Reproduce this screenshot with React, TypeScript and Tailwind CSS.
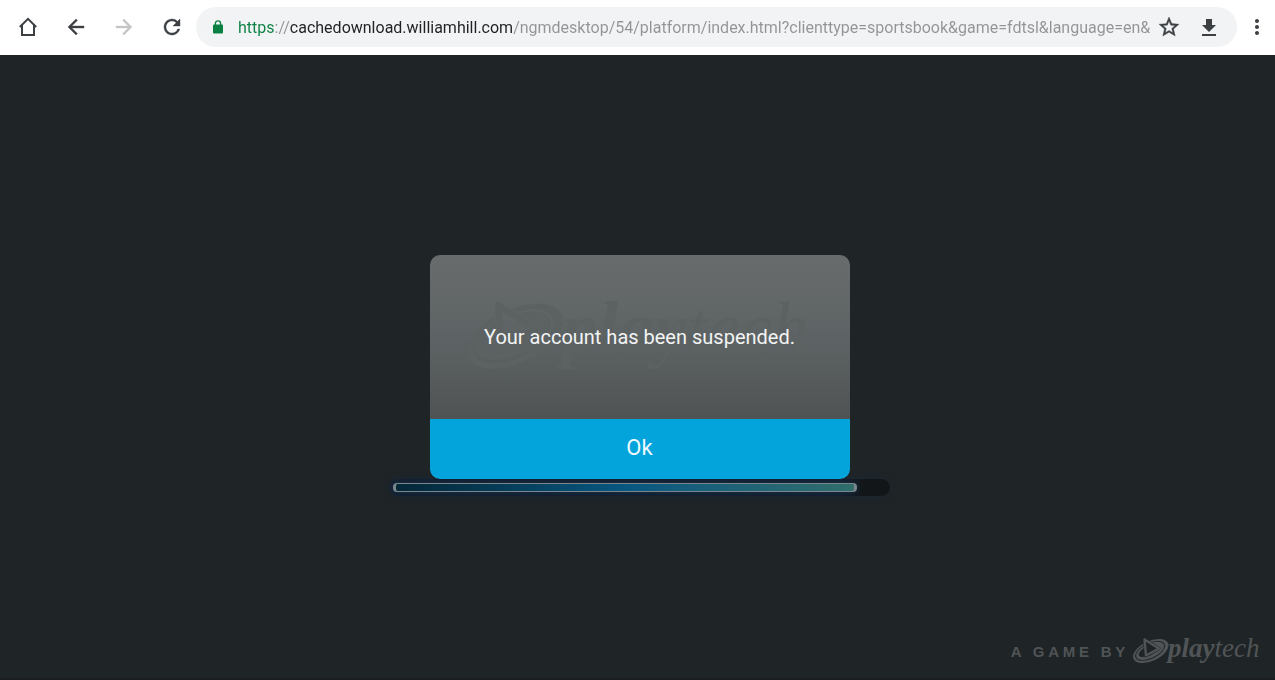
import React from "react";
import { MdArrowBack, MdArrowForward, MdRefresh, MdStarBorder, MdMoreVert } from "react-icons/md";

const ADDRESS =
  "https://cachedownload.williamhill.com/ngmdesktop/54/platform/index.html?clienttype=sportsbook&game=fdtsl&language=en&";

function HomeIcon() {
  return (
    <svg viewBox="0 0 24 24" className="size-6" fill="none" stroke="currentColor" strokeWidth="2" aria-hidden="true">
      <path d="M3.8 12 12 3.9 20.2 12M6 10.5V20h12v-9.5" />
    </svg>
  );
}

function LockIcon() {
  return (
    <svg viewBox="0 0 16 16" className="size-4 shrink-0 text-[#0b8043]" aria-hidden="true">
      <rect x="3" y="5.5" width="10" height="9" rx="1" fill="currentColor" />
      <path d="M5.4 6V4.4a2.6 2.6 0 0 1 5.2 0V6" fill="none" stroke="currentColor" strokeWidth="1.3" />
    </svg>
  );
}

function DownloadIcon() {
  return (
    <svg viewBox="0 0 24 24" className="size-6" fill="currentColor" aria-hidden="true">
      <path d="M19 10h-4V4H9v6H5l7 7 7-7zM5 19v2h14v-2H5z" />
    </svg>
  );
}

function PlaytechLogo({ className, id }: { className: string; id: string }) {
  return (
    <svg viewBox="0 -1 128 34" className={className} fill="currentColor" role="img" aria-label="playtech">
      <mask id={id} maskUnits="userSpaceOnUse" x="-2" y="0" width="42" height="34">
        <rect x="-2" width="42" height="34" fill="white" />
        <path d="M11.5 6.5 26 15.5 13 22.5z" fill="black" stroke="black" strokeWidth="3.2" strokeLinejoin="round" />
        <path d="M-2 0h13v9L3 15h-5z" fill="black" />
      </mask>
      <g mask={`url(#${id})`}>
        <g transform="translate(17.8 18) rotate(-25)">
          <path
            fillRule="evenodd"
            d="M-19 0a19 10 0 1 1 38 0a19 10 0 1 1-38 0zM-16.6-.4a16 8 0 1 0 32 0a16 8 0 1 0-32 0z"
          />
          <path
            fillRule="evenodd"
            d="M-15.6-.5a15 7.2 0 1 1 30 0a15 7.2 0 1 1-30 0zM-12.6-1a10.5 4.6 0 1 0 21 0a10.5 4.6 0 1 0-21 0z"
          />
        </g>
      </g>
      <path fill="none" stroke="currentColor" strokeWidth="2.4" strokeLinejoin="round" d="M11.5 6.5 26 15.5 13 22.5z" />
      <text x="35" y="24" fontSize="27" fontStyle="italic" className="font-['Liberation_Serif',serif]">
        <tspan fontWeight="700">play</tspan>
        <tspan>tech</tspan>
      </text>
    </svg>
  );
}

const toolButton = "flex size-12 shrink-0 items-center justify-center";
const barButton = "flex size-10 shrink-0 items-center justify-center";
const boldIcon = "size-6 [&>path:last-child]:stroke-current [&>path:last-child]:stroke-[0.4]";

export default function App() {
  return (
    <div className="flex min-h-screen flex-col bg-[#1f2427] font-['Roboto',sans-serif]">
      <header className="flex h-[55px] shrink-0 items-center bg-white pb-px pl-1 text-[#3c4043]">
        <nav className="flex" aria-label="Browser">
          <button className={toolButton} aria-label="Home"><HomeIcon /></button>
          <button className={toolButton} aria-label="Back"><MdArrowBack className={boldIcon} /></button>
          <button className={`${toolButton} text-[#c4c5c6]`} aria-label="Forward" disabled><MdArrowForward className={boldIcon} /></button>
          <button className={toolButton} aria-label="Reload"><MdRefresh className={boldIcon} /></button>
        </nav>
        <div className="flex h-10 min-w-0 flex-1 items-center rounded-full bg-[#f1f3f4] pl-3.5 pr-2">
          <LockIcon />
          <input
            type="text"
            aria-label="Address"
            defaultValue={ADDRESS}
            spellCheck={false}
            className="-mr-1 ml-3 h-8 min-w-0 flex-1 bg-[linear-gradient(90deg,#0b8043_36px,#929496_36px,#929496_52px,#202124_52px,#202124_275px,#929496_275px)] bg-clip-text text-base text-transparent outline-none"
          />
          <button className={barButton} aria-label="Bookmark"><MdStarBorder className={boldIcon} /></button>
          <button className={barButton} aria-label="Download"><DownloadIcon /></button>
        </div>
        <button className="ml-0.5 flex h-12 w-9 shrink-0 items-center justify-center" aria-label="More options"><MdMoreVert className="size-6" /></button>
      </header>

      <main className="flex flex-1 flex-col border-b-2 border-[#1b1c20] pt-[30px]">
        <div className="flex-[1_1_0px]" />
        <div className="flex flex-col items-center pl-1">
          <section
            role="alertdialog"
            aria-labelledby="account-message"
            className="z-10 w-full max-w-[420px] overflow-hidden rounded-[10px]"
          >
            <div className="grid h-[164px] place-items-center bg-linear-to-b from-[#696c6d] via-[#5d6364] to-[#505354]">
              <PlaytechLogo id="watermark-gap" className="col-start-1 row-start-1 mb-3 w-[346px] text-[#5c6162]" />
              <p id="account-message" className="z-10 col-start-1 row-start-1 text-xl text-[#f3f4f4]">
                Your account has been suspended.
              </p>
            </div>
            <button className="flex h-[60px] w-full items-center justify-center bg-[#03a4dc] pb-1 text-[22px] text-[#eefaff]">
              Ok
            </button>
          </section>
          <div
            role="progressbar"
            aria-label="Loading"
            aria-valuenow={93}
            className="flex h-[17px] w-full max-w-[500px] items-center rounded-full bg-linear-to-r from-[#14202f] from-90% to-[#131618] to-95% px-[3px] shadow-[0_0_6px_#1a2937]"
          >
            <div className="h-[9px] w-[94%] rounded-[4px] border border-x-[3px] border-[#7b858c] bg-linear-to-r from-[#042737] via-[#075781] to-[#306d6b] shadow-[0_0_5px_#14304c]" />
          </div>
        </div>
        <footer className="flex flex-[1_1_0px] items-end justify-end gap-1 pb-3 pr-3.5 text-[#505456]">
          <span className="pb-1 font-['Liberation_Sans_Narrow','Liberation_Sans',sans-serif] text-[15px] font-bold leading-5 tracking-[0.25em]">
            A GAME BY
          </span>
          <PlaytechLogo id="brand-gap" className="h-[34px] w-32" />
        </footer>
      </main>
    </div>
  );
}
